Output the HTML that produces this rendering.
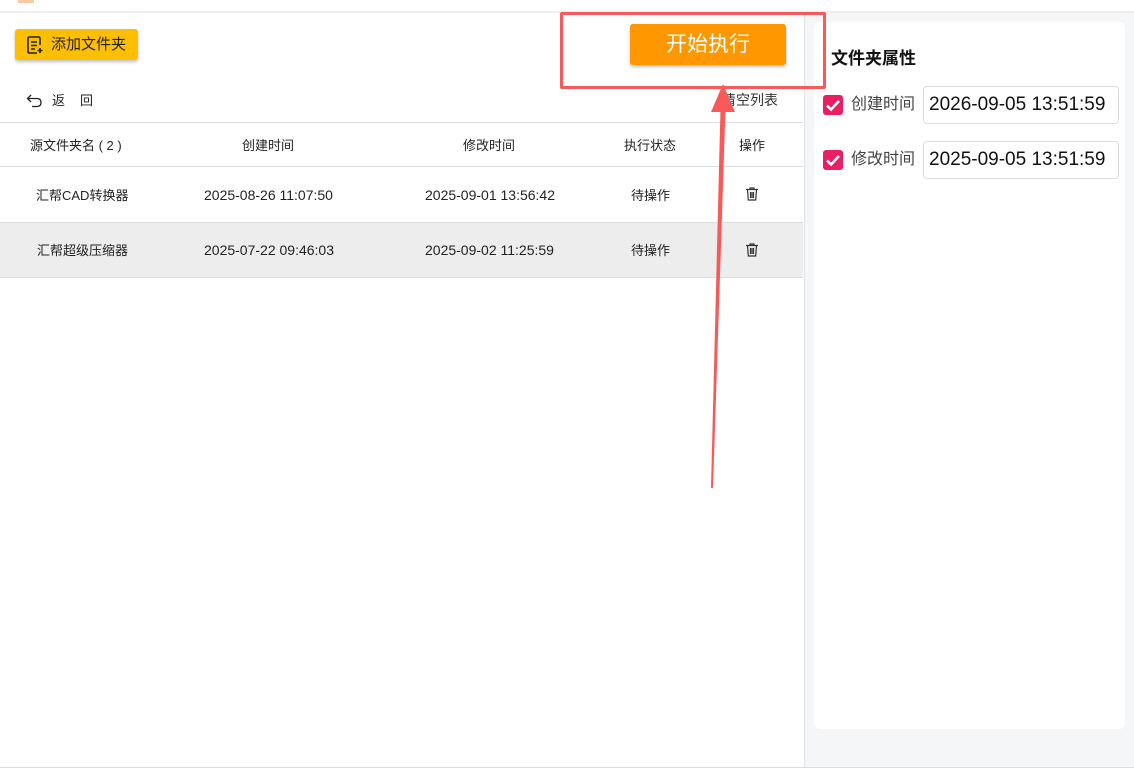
<!DOCTYPE html>
<html><head><meta charset="utf-8"><style>
*{margin:0;padding:0;box-sizing:border-box}
body{width:1134px;height:774px;position:relative;background:#fff;font-family:"Liberation Sans","Noto Sans CJK SC",sans-serif;color:#222;overflow:hidden;line-height:1}
.abs{position:absolute;line-height:1}
.hd{font-size:13px;top:139px}
.cell{font-size:13px}
.dt{font-size:14px}
.line{position:absolute;left:0;width:803px;height:1px;background:#ddd}
</style></head><body>
<div class="abs" style="left:18px;top:0;width:16px;height:3px;background:#f8c8a8"></div>
<div class="abs" style="left:0;top:11px;width:1134px;height:2px;background:#eee"></div>
<div class="abs" style="left:804px;top:13px;width:330px;height:755px;background:#f5f6f8;border-left:1px solid #e3e3e3"></div>
<div class="abs" style="left:814px;top:22px;width:311px;height:707px;background:#fff;border-radius:6px"></div>
<div class="abs" style="left:0;top:767px;width:1134px;height:1px;background:#ddd"></div>

<div class="abs" style="left:15px;top:29px;width:123px;height:31px;background:#fdbf00;border-radius:3px;box-shadow:0 2px 3px rgba(0,0,0,.25)"></div>
<svg class="abs" style="left:25px;top:35px" width="20" height="20" viewBox="0 0 20 20" fill="none" stroke="#222" stroke-width="1.6"><path d="M15 10V3.5Q15 2 13.5 2H4.5Q3 2 3 3.5V16.5Q3 18 4.5 18H12"/><path d="M6 7h6M6 10.5h6M6 14h4"/><path d="M15 13v5M12.5 15.5h5"/></svg>
<div class="abs" style="left:51px;top:37px;font-size:15px">添加文件夹</div>

<div class="abs" style="left:630px;top:24px;width:156px;height:41px;background:#ff9800;border-radius:3px;box-shadow:0 2px 3px rgba(0,0,0,.25)"></div>
<div class="abs" style="left:630px;top:34px;width:156px;text-align:center;color:#fff;font-size:21px">开始执行</div>
<div class="abs" style="left:560px;top:12px;width:266px;height:77px;border:3px solid #f55b5b;border-radius:2px"></div>

<svg class="abs" style="left:26px;top:93px" width="18" height="16" viewBox="0 0 18 16" fill="none" stroke="#222" stroke-width="1.3"><path d="M5 2L1.5 5.5 5 9"/><path d="M1.5 5.5H11Q15 5.5 15 9.5T11 13.5H6"/></svg>
<div class="abs" style="left:52px;top:94px;font-size:13px">返</div>
<div class="abs" style="left:80px;top:94px;font-size:13px">回</div>
<div class="abs" style="left:722px;top:93px;font-size:14px;color:#333">清空列表</div>

<div class="line" style="top:122px"></div>
<div class="abs hd" style="left:30px">源文件夹名 ( 2 )</div>
<div class="abs hd" style="left:242px">创建时间</div>
<div class="abs hd" style="left:463px">修改时间</div>
<div class="abs hd" style="left:624px">执行状态</div>
<div class="abs hd" style="left:739px">操作</div>
<div class="line" style="top:166px"></div>

<div class="abs" style="left:0;top:222px;width:803px;height:55px;background:#ededed"></div>
<div class="line" style="top:222px"></div>
<div class="line" style="top:277px"></div>

<div class="abs cell" style="left:36px;top:189px">汇帮CAD转换器</div>
<div class="abs dt" style="left:204px;top:188px">2025-08-26 11:07:50</div>
<div class="abs dt" style="left:425px;top:188px">2025-09-01 13:56:42</div>
<div class="abs cell" style="left:631px;top:189px">待操作</div>
<div class="abs cell" style="left:37px;top:244px">汇帮超级压缩器</div>
<div class="abs dt" style="left:204px;top:243px">2025-07-22 09:46:03</div>
<div class="abs dt" style="left:425px;top:243px">2025-09-02 11:25:59</div>
<div class="abs cell" style="left:631px;top:244px">待操作</div>
<svg class="abs" style="left:744px;top:186px" width="16" height="16" viewBox="0 0 16 16" fill="none" stroke="#333" stroke-width="1.2"><path d="M2 3.5h12M6 3.5V2h4v1.5M3.5 3.5l.8 10.5h7.4l.8-10.5M6.5 6v6M8 6v6M9.5 6v6"/></svg>
<svg class="abs" style="left:744px;top:242px" width="16" height="16" viewBox="0 0 16 16" fill="none" stroke="#333" stroke-width="1.2"><path d="M2 3.5h12M6 3.5V2h4v1.5M3.5 3.5l.8 10.5h7.4l.8-10.5M6.5 6v6M8 6v6M9.5 6v6"/></svg>

<svg class="abs" style="left:0;top:0" width="1134" height="774"><polygon points="711,488 713,488 725.5,108 720.5,108" fill="#f85a5a"/><polygon points="723,84 711,112 735,112" fill="#f85a5a"/></svg>

<div class="abs" style="left:831px;top:50px;font-size:17px;font-weight:bold;color:#111">文件夹属性</div>
<div class="abs" style="left:823px;top:95px;width:20px;height:20px;background:#e91e63;border-radius:3px"></div>
<svg class="abs" style="left:823px;top:95px" width="20" height="20"><path d="M4 10.5l4 4L16 6" stroke="#fff" stroke-width="2.6" fill="none"/></svg>
<div class="abs" style="left:851px;top:97px;font-size:16px;color:#444">创建时间</div>
<div class="abs" style="left:923px;top:86px;width:196px;height:38px;border:1px solid #ddd;border-radius:4px;background:#fff"></div>
<div class="abs" style="left:929px;top:95px;font-size:19px;color:#111">2026-09-05 13:51:59</div>
<div class="abs" style="left:823px;top:150px;width:20px;height:20px;background:#e91e63;border-radius:3px"></div>
<svg class="abs" style="left:823px;top:150px" width="20" height="20"><path d="M4 10.5l4 4L16 6" stroke="#fff" stroke-width="2.6" fill="none"/></svg>
<div class="abs" style="left:851px;top:152px;font-size:16px;color:#444">修改时间</div>
<div class="abs" style="left:923px;top:141px;width:196px;height:38px;border:1px solid #ddd;border-radius:4px;background:#fff"></div>
<div class="abs" style="left:929px;top:150px;font-size:19px;color:#111">2025-09-05 13:51:59</div>
</body></html>
